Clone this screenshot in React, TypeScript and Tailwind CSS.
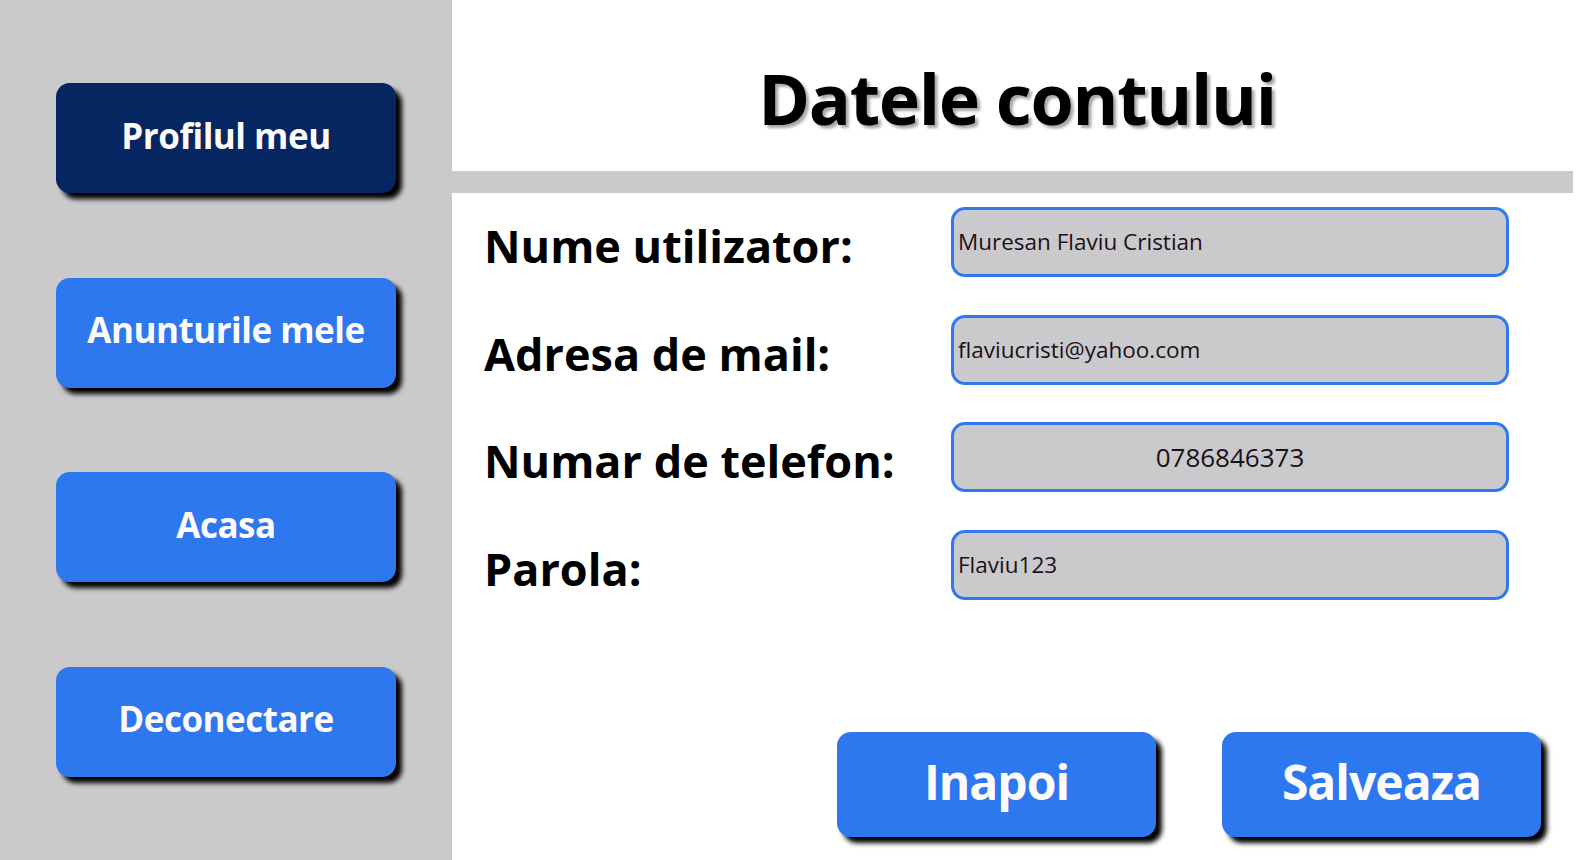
const menu = [
  { label: 'Profilul meu', active: true },
  { label: 'Anunturile mele', active: false },
  { label: 'Acasa', active: false },
  { label: 'Deconectare', active: false },
];

const fields = [
  { label: 'Nume utilizator:', value: 'Muresan Flaviu Cristian', center: false },
  { label: 'Adresa de mail:', value: 'flaviucristi@yahoo.com', center: false },
  { label: 'Numar de telefon:', value: '0786846373', center: true },
  { label: 'Parola:', value: 'Flaviu123', center: false },
];

export default function App() {
  return (
    <div className="flex h-screen w-full overflow-hidden bg-white font-['Open_Sans',sans-serif]">
      {/* Sidebar */}
      <aside className="flex w-[452px] shrink-0 flex-col gap-[84.5px] bg-[#cacacc] pl-[56px] pt-[83px]">
        {menu.map((item) => (
          <button
            key={item.label}
            className={`flex h-[110px] w-[340px] items-center justify-center rounded-[14px] pb-[6px] text-[35px] font-bold leading-none tracking-[-0.5px] text-[#fffafa] shadow-[6px_6px_5px_#000] ${
              item.active ? 'bg-[#052660]' : 'bg-[#2e78ef]'
            }`}
          >
            {item.label}
          </button>
        ))}
      </aside>

      {/* Main */}
      <main className="flex flex-1 flex-col">
        <div className="flex h-[171px] justify-center pt-[63px]">
          <h1 className="text-[70px] font-bold leading-none tracking-[-1.3px] text-black [text-shadow:3px_3px_3px_rgba(0,0,0,0.35)]">
            Datele contului
          </h1>
        </div>
        <div className="mr-[9px] h-[22px] bg-[#cacacc]" />

        <div className="grid grid-cols-[467px_558px] gap-y-[37.7px] pl-[32px] pt-[14px]">
          {fields.map((f) => (
            <div key={f.label} className="contents">
              <div className="mt-[16px] text-[45px] font-bold leading-none text-black">{f.label}</div>
              <div
                className={`flex h-[70px] items-center rounded-[14px] border-[3px] border-[#2f78ef] bg-[#cacacc] text-[#1c1017] ${
                  f.center ? 'justify-center text-[26px]' : 'pl-[4px] text-[22.5px]'
                }`}
              >
                {f.value}
              </div>
            </div>
          ))}
        </div>

        <div className="mt-auto flex justify-end gap-[66px] pb-[23px] pr-[41px]">
          <button className="flex h-[105px] w-[319px] items-center justify-center rounded-[14px] bg-[#2e78ef] pb-[6px] text-[48px] font-bold leading-none tracking-[-1px] text-[#fffafa] shadow-[6px_6px_5px_#000]">
            Inapoi
          </button>
          <button className="flex h-[105px] w-[319px] items-center justify-center rounded-[14px] bg-[#2e78ef] pb-[6px] text-[48px] font-bold leading-none tracking-[-1px] text-[#fffafa] shadow-[6px_6px_5px_#000]">
            Salveaza
          </button>
        </div>
      </main>
    </div>
  );
}
